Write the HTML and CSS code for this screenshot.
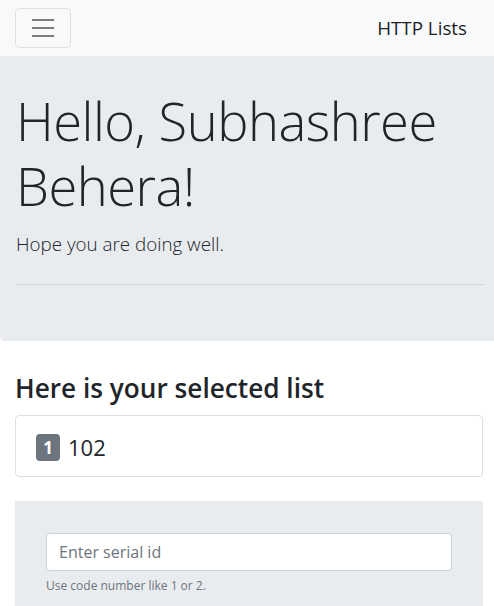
FILE: index.html
```html
<!DOCTYPE html>
<html lang="en">
<head>
<meta charset="utf-8">
<title>HTTP Lists</title>
<link rel="stylesheet" href="styles.css">
</head>
<body>
<nav class="navbar">
  <button class="toggler" type="button" aria-label="Toggle navigation">
    <svg width="30" height="30" viewBox="0 0 30 30" aria-hidden="true"><path d="M4 7h22M4 15h22M4 23h22" stroke="rgba(0,0,0,.5)" stroke-width="2" stroke-linecap="butt" fill="none"/></svg>
  </button>
  <a class="brand" href="#">HTTP Lists</a>
</nav>
<div class="jumbotron">
  <h1 class="display">Hello, Subhashree Behera!</h1>
  <p class="lead">Hope you are doing well.</p>
  <hr class="divider">
</div>
<div class="container">
  <h3 class="section-title">Here is your selected list</h3>
  <ul class="list-group">
    <li class="list-item"><h4 class="item-title"><span class="badge">1</span> 102</h4></li>
  </ul>
  <div class="form-box">
    <input class="form-control" type="text" placeholder="Enter serial id">
    <small class="help">Use code number like 1 or 2.</small>
  </div>
</div>
</body>
</html>
```
FILE: styles.css
```css
* { box-sizing: border-box; }
html, body { margin: 0; padding: 0; }
body {
  font-family: "Open Sans", "Noto Sans", sans-serif;
  font-size: 16px;
  line-height: 1.5;
  color: #212529;
  background: #fff;
  overflow: hidden;
}
.navbar {
  height: 56px;
  background: #f8f9fa;
  display: flex;
  align-items: center;
  justify-content: space-between;
  padding: 0 27px 0 15px;
}
.toggler {
  width: 56px;
  height: 40px;
  margin-top: -1px;
  border: 1px solid rgba(0,0,0,.1);
  border-radius: 4px;
  background: transparent;
  display: flex;
  align-items: center;
  justify-content: center;
  padding: 0;
}
.toggler svg { display: block; }
.brand {
  font-size: 18.8px;
  color: rgba(0,0,0,.9);
  text-decoration: none;
  line-height: 1.5;
}
.jumbotron {
  background: #e9ecef;
  padding: 32px 16px;
  border-radius: 0 0 5px 5px;
  margin-right: -6px;
  margin-bottom: 32px;
}
.display {
  font-size: 52.5px;
  font-weight: 300;
  line-height: 1.24;
  margin: 0 0 12px;
  letter-spacing: -0.5px;
}
.lead {
  font-size: 18.8px;
  font-weight: 300;
  margin: 0;
  line-height: 1.5;
}
.divider {
  border: 0;
  border-top: 1px solid rgba(0,0,0,.1);
  margin: 26px 0 24px;
}
.container {
  padding: 0 11px 0 15px;
}
.section-title {
  font-size: 26.2px;
  font-weight: 600;
  line-height: 1.2;
  margin: 0 0 10px;
}
.list-group {
  list-style: none;
  margin: 0 0 24px;
  padding: 0;
}
.list-item {
  border: 1px solid rgba(0,0,0,.125);
  border-radius: 4px;
  padding: 12px 20px 12px;
  height: 62px;
}
.item-title {
  font-size: 22px;
  font-weight: 400;
  line-height: 1.2;
  margin: 0;
  display: flex;
  align-items: center;
  gap: 8px;
  padding-top: 6px;
}
.badge {
  display: inline-flex;
  align-items: center;
  justify-content: center;
  width: 24px;
  height: 27px;
  background: #6c757d;
  color: #fff;
  font-size: 17px;
  font-weight: 700;
  border-radius: 4px;
  line-height: 1;
}
.form-box {
  background: #e9ecef;
  padding: 32px 31px 20px;
}
.form-control {
  display: block;
  width: 100%;
  height: 38px;
  padding: 6px 12px;
  font-family: inherit;
  font-size: 16px;
  color: #495057;
  background: #fff;
  border: 1px solid #ced4da;
  border-radius: 4px;
}
.form-control::placeholder { color: #6c757d; }
.help {
  display: block;
  margin-top: 6px;
  font-size: 12px;
  color: #6c757d;
}
```
